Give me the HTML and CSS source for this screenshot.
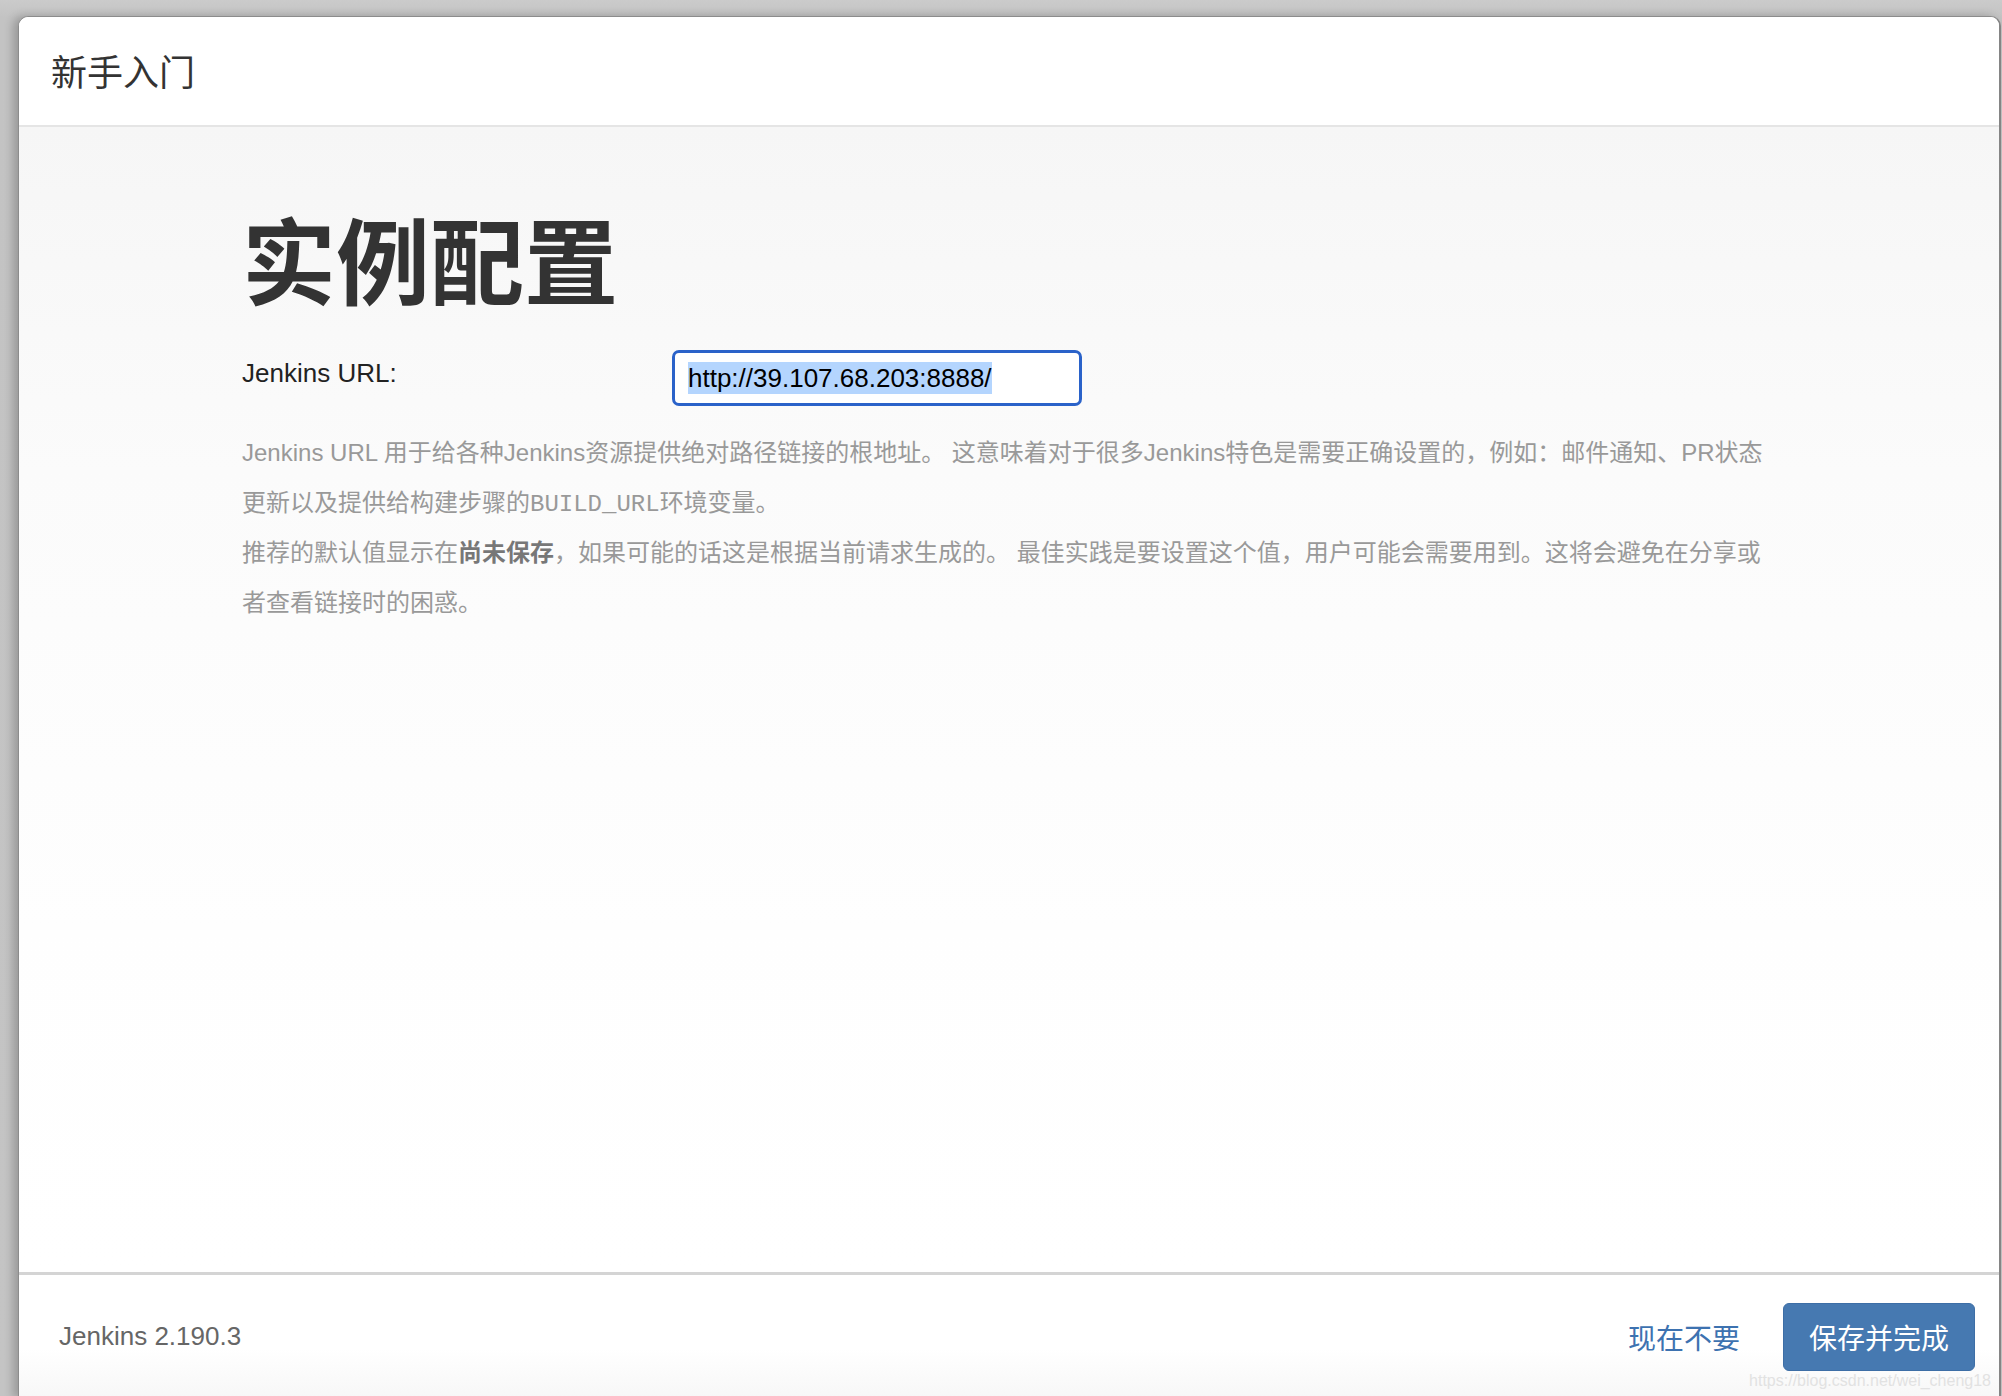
FILE: index.html
```html
<!DOCTYPE html>
<html lang="zh-CN">
<head>
<meta charset="utf-8">
<title>新手入门</title>
<link rel="stylesheet" href="styles.css">
</head>
<body>
<div class="modal">
  <header class="modal-header">
    <h4 class="modal-title">新手入门</h4>
  </header>
  <main class="modal-body">
    <h1 class="heading">实例配置</h1>
    <div class="form-row">
      <label class="form-label">Jenkins URL:</label>
      <div class="url-input"><span class="selection">http://39.107.68.203:8888/</span></div>
    </div>
    <div class="help">
      <p>Jenkins URL 用于给各种Jenkins资源提供绝对路径链接的根地址。 这意味着对于很多Jenkins特色是需要正确设置的，例如：邮件通知、PR状态更新以及提供给构建步骤的<code>BUILD_URL</code>环境变量。</p>
      <p>推荐的默认值显示在<strong>尚未保存</strong>，如果可能的话这是根据当前请求生成的。 最佳实践是要设置这个值，用户可能会需要用到。这将会避免在分享或者查看链接时的困惑。</p>
    </div>
  </main>
  <footer class="modal-footer">
    <span class="version">Jenkins 2.190.3</span>
    <div class="actions">
      <a class="skip-link">现在不要</a>
      <button class="btn-primary">保存并完成</button>
    </div>
  </footer>
  <div class="watermark">https://blog.csdn.net/wei_cheng18</div>
</div>
</body>
</html>
```

FILE: styles.css
```css
html, body {
  margin: 0;
  padding: 0;
}
body {
  width: 2002px;
  height: 1396px;
  overflow: hidden;
  background: linear-gradient(to bottom, #cbcbcb 0, #c3c3c3 17px, #c4c4c4 100%);
  font-family: "Liberation Sans", "Noto Sans CJK SC", sans-serif;
  padding-top: 16px;
  padding-left: 18px;
  box-sizing: border-box;
}
.modal {
  position: relative;
  width: 1980px;
  height: 1381px;
  background: #fff;
  border: 1px solid #8c8c8c;
  border-right: 2px solid #858585;
  border-bottom: none;
  border-radius: 10px 10px 0 0;
  box-shadow: -5px 0 10px rgba(0, 0, 0, 0.22);
  display: flex;
  flex-direction: column;
  overflow: hidden;
}
.modal-header {
  height: 108px;
  flex: none;
  display: flex;
  align-items: center;
  padding: 6px 0 0 32px;
  box-sizing: border-box;
  background: #fff;
  border-bottom: 2px solid #e5e5e5;
  height: 110px;
}
.modal-title {
  margin: 0;
  font-size: 36px;
  font-weight: normal;
  color: #333;
  line-height: 1;
}
.modal-body {
  flex: 1;
  background: linear-gradient(to bottom, #f6f6f6 0, #fbfbfb 30%, #fefefe 70%, #ffffff 100%);
  padding: 72px 0 0 223px;
}
.heading {
  margin: 0;
  font-size: 94px;
  line-height: 116px;
  font-weight: bold;
  color: #333;
  font-family: "Noto Sans CJK SC", sans-serif;
}
.form-row {
  display: flex;
  align-items: flex-start;
  margin-top: 35px;
}
.form-label {
  width: 430px;
  flex: none;
  font-size: 26px;
  line-height: 46px;
  color: #222;
}
.url-input {
  height: 50px;
  border: 3px solid #2a62c9;
  border-radius: 7px;
  background: #fff;
  display: flex;
  align-items: center;
  padding-left: 13px;
  box-sizing: content-box;
  width: 391px;
}
.selection {
  background: #b4d5fe;
  color: #000;
  font-size: 26px;
  line-height: 32px;
}
.help {
  width: 1530px;
  margin-top: 22px;
  color: #999;
  font-size: 24px;
  line-height: 50px;
}
.help p {
  margin: 0;
}
.help code {
  font-family: "Liberation Mono", monospace;
  font-size: 24px;
  line-height: 1;
  color: #999;
}
.help strong {
  color: #777;
  font-weight: bold;
}
.modal-footer {
  flex: none;
  height: 123px;
  border-top: 3px solid #d4d4d4;
  display: flex;
  align-items: center;
  justify-content: space-between;
  padding: 0 24px 0 40px;
  background: linear-gradient(to bottom, #ffffff 0, #ffffff 60%, #f7f7f7 100%);
}
.version {
  font-size: 26px;
  color: #666;
}
.actions {
  display: flex;
  align-items: center;
  gap: 43px;
}
.skip-link {
  font-size: 28px;
  color: #3d72b0;
  cursor: pointer;
}
.btn-primary {
  width: 192px;
  height: 68px;
  border: 1px solid #3d6ea6;
  border-radius: 6px;
  background: #4679b1;
  color: #fff;
  font-size: 28px;
  font-family: "Liberation Sans", "Noto Sans CJK SC", sans-serif;
  padding: 0;
}
.watermark {
  position: absolute;
  right: 8px;
  bottom: 8px;
  font-size: 16px;
  color: #e2e2e2;
  font-family: "Liberation Sans", sans-serif;
}
```
